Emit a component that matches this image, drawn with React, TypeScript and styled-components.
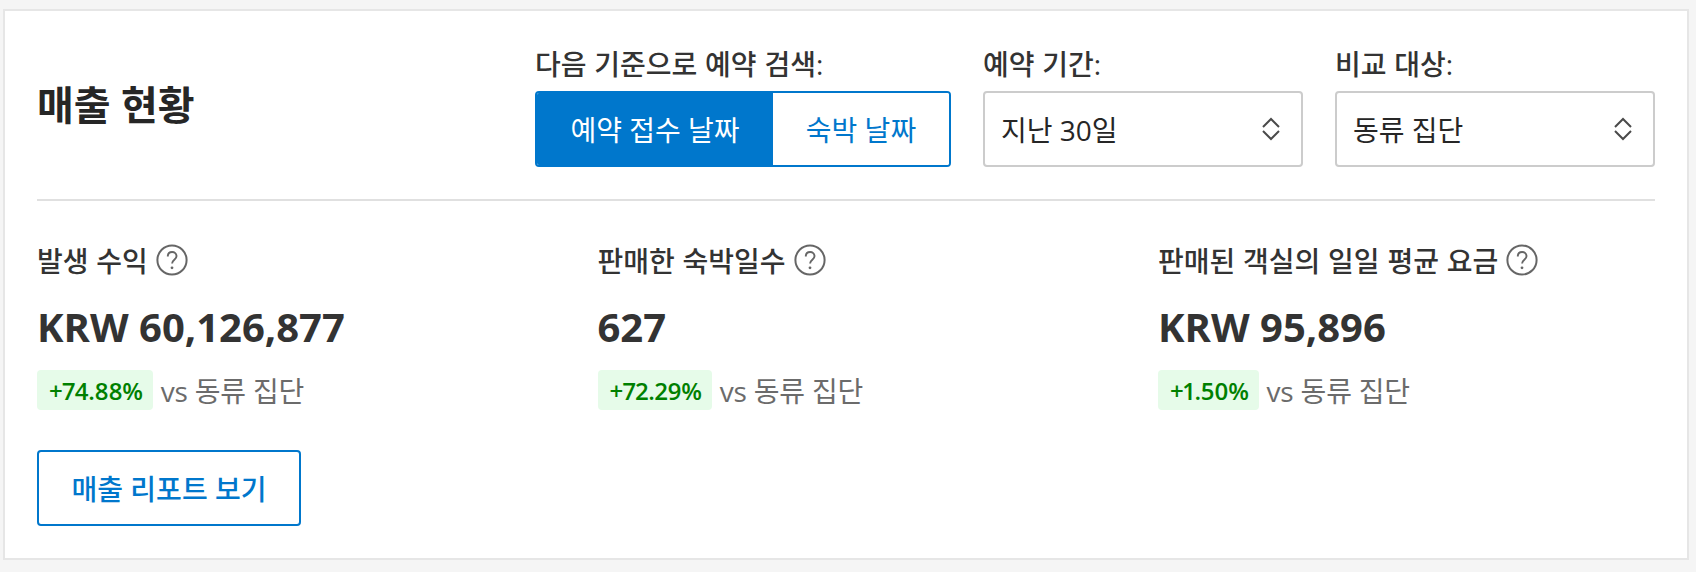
import React from "react";
import styled, { createGlobalStyle } from "styled-components";

const Global = createGlobalStyle`
  html, body { margin: 0; padding: 0; background: #f5f5f5; }
  * { box-sizing: border-box; }
  body { font-family: "Open Sans", "Noto Sans CJK KR", sans-serif; color: #333; }
`;

const Page = styled.div`
  padding: 9px 7px 12px 3px;
`;
const Card = styled.section`
  background: #fff;
  border: 2px solid #e6e6e6;
  height: 551px;
  padding: 0 32px;
`;
const Header = styled.header`
  display: flex;
  justify-content: space-between;
  align-items: center;
  height: 190px;
  border-bottom: 2px solid #e0e0e0;
`;
const Title = styled.h2`
  margin: 0;
  font-size: 40px;
  font-weight: 700;
  line-height: 48px;
  color: #262626;
`;
const Controls = styled.div`
  display: flex;
  align-self: flex-start;
  gap: 32px;
  padding-top: 38px;
`;
const Field = styled.div<{ $w: number }>`
  width: ${(p) => p.$w}px;
`;
const Label = styled.div`
  font-size: 28px;
  line-height: 30px;
  height: 42px;
  font-weight: 500;
  word-spacing: 0.5px;
  color: #333;
  white-space: nowrap;
`;
const Toggle = styled.div`
  display: flex;
  height: 76px;
  border: 2px solid #0077cc;
  border-radius: 4px;
  overflow: hidden;
`;
const ToggleOption = styled.button<{ $active?: boolean; $w: number }>`
  width: ${(p) => p.$w}px;
  border: 0;
  padding: 0;
  font: inherit;
  font-size: 28px;
  background: ${(p) => (p.$active ? "#0077cc" : "#fff")};
  color: ${(p) => (p.$active ? "#fff" : "#0077cc")};
`;
const Select = styled.div`
  height: 76px;
  border: 2px solid #cccccc;
  border-radius: 4px;
  padding: 0 21px 0 16px;
  display: flex;
  align-items: center;
  justify-content: space-between;
  font-size: 28px;
  color: #262626;
`;
const Metrics = styled.div`
  display: grid;
  grid-template-columns: repeat(3, 496.5px);
  column-gap: 64px;
  padding-top: 41px;
`;
const Metric = styled.div``;
const MetricLabel = styled.div`
  display: flex;
  align-items: center;
  gap: 8px;
  height: 36px;
  font-size: 28px;
  font-weight: 500;
  word-spacing: 0.5px;
  color: #333;
`;
const HelpIcon = styled.svg`
  width: 32px;
  height: 32px;
  flex: none;
`;
const Value = styled.div`
  margin-top: 25px;
  font-size: 40px;
  line-height: 48px;
  font-weight: 700;
  color: #333;
`;
const Delta = styled.div`
  display: flex;
  align-items: center;
  gap: 8px;
  margin-top: 19px;
  height: 40px;
  font-size: 28px;
  letter-spacing: -0.2px;
  color: #6b6b6b;
`;
const Badge = styled.span`
  display: inline-flex;
  align-items: center;
  height: 40px;
  padding: 0 10px 0 12px;
  border-radius: 4px;
  background: #e6fbe9;
  color: #008000;
  font-size: 24px;
  font-weight: 600;
  letter-spacing: -0.3px;
  font-variant-numeric: proportional-nums;
`;
const ReportButton = styled.button`
  display: block;
  margin-top: 40px;
  width: 264px;
  height: 76px;
  border: 2px solid #0077cc;
  border-radius: 4px;
  background: #fff;
  color: #0077cc;
  font: inherit;
  font-size: 28px;
  font-weight: 500;
  padding: 0;
`;

const Updown = () => (
  <svg width="18" height="24" viewBox="0 0 18 24" fill="none" stroke="#4a4a4a" strokeWidth="2">
    <path d="M1 10 L9 2 L17 10" />
    <path d="M1 14 L9 22 L17 14" />
  </svg>
);

const Help = () => (
  <HelpIcon viewBox="0 0 32 32" fill="none">
    <circle cx="16" cy="16" r="14.6" stroke="#666666" strokeWidth="2" />
    <path d="M11.8 12.5c0-2.8 1.9-4.5 4.3-4.5s4.4 1.7 4.4 4.2c0 3.5-4.4 3.6-4.4 7.3" stroke="#666666" strokeWidth="1.9" />
    <circle cx="16" cy="23.8" r="1.4" fill="#666666" />
  </HelpIcon>
);

const metrics = [
  { label: "발생 수익", value: "KRW 60,126,877", delta: "+74.88%" },
  { label: "판매한 숙박일수", value: "627", delta: "+72.29%" },
  { label: "판매된 객실의 일일 평균 요금", value: "KRW 95,896", delta: "+1.50%" },
];

export default function App() {
  return (
    <Page>
      <Global />
      <Card>
        <Header>
          <Title>매출 현황</Title>
          <Controls>
            <Field $w={416}>
              <Label>다음 기준으로 예약 검색:</Label>
              <Toggle>
                <ToggleOption $active $w={236}>예약 접수 날짜</ToggleOption>
                <ToggleOption $w={176}>숙박 날짜</ToggleOption>
              </Toggle>
            </Field>
            <Field $w={320}>
              <Label>예약 기간:</Label>
              <Select>지난 30일<Updown /></Select>
            </Field>
            <Field $w={320}>
              <Label>비교 대상:</Label>
              <Select>동류 집단<Updown /></Select>
            </Field>
          </Controls>
        </Header>
        <Metrics>
          {metrics.map((m) => (
            <Metric key={m.label}>
              <MetricLabel>{m.label}<Help /></MetricLabel>
              <Value>{m.value}</Value>
              <Delta><Badge>{m.delta}</Badge>vs 동류 집단</Delta>
            </Metric>
          ))}
        </Metrics>
        <ReportButton>매출 리포트 보기</ReportButton>
      </Card>
    </Page>
  );
}
